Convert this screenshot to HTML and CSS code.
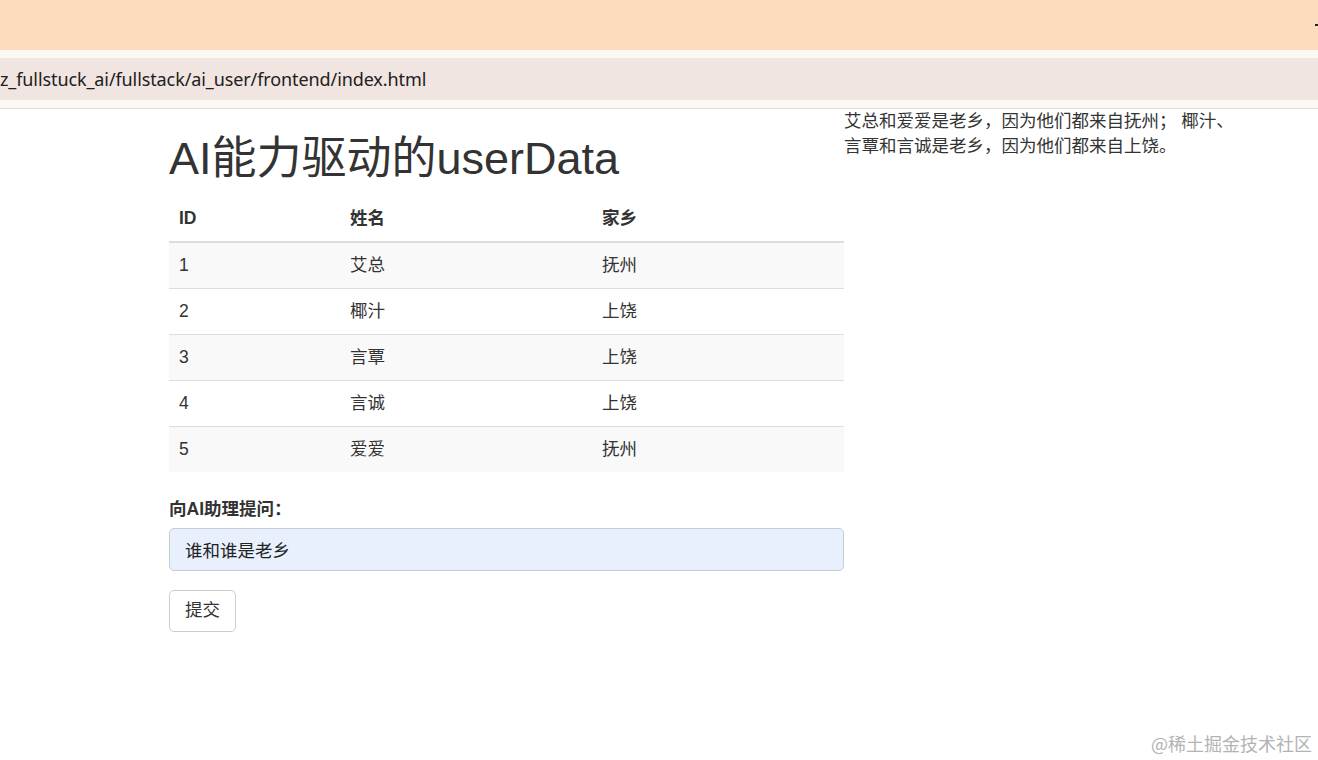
FILE: index.html
```html
<!DOCTYPE html>
<html lang="zh-CN">
<head>
<meta charset="utf-8">
<title>AI能力驱动的userData</title>
<link rel="stylesheet" href="styles.css">
</head>
<body>
<div class="chrome">
  <div class="tabbar"><span class="tab-mark"></span></div>
  <div class="gap"></div>
  <div class="addressbar"><span class="url">z_fullstuck_ai/fullstack/ai_user/frontend/index.html</span></div>
  <div class="gap gap-bottom"></div>
</div>
<div class="page">
  <div class="main-col">
    <h1 class="title">AI能力驱动的userData</h1>
    <table class="table">
      <thead>
        <tr><th class="c-id">ID</th><th class="c-name">姓名</th><th class="c-home">家乡</th></tr>
      </thead>
      <tbody>
        <tr><td>1</td><td>艾总</td><td>抚州</td></tr>
        <tr><td>2</td><td>椰汁</td><td>上饶</td></tr>
        <tr><td>3</td><td>言覃</td><td>上饶</td></tr>
        <tr><td>4</td><td>言诚</td><td>上饶</td></tr>
        <tr><td>5</td><td>爱爱</td><td>抚州</td></tr>
      </tbody>
    </table>
    <form class="ask-form">
      <div class="form-group">
        <label class="label" for="q">向AI助理提问：</label>
        <input class="input" id="q" type="text" value="谁和谁是老乡">
      </div>
      <button class="btn" type="button">提交</button>
    </form>
  </div>
  <div class="answer-col">艾总和爱爱是老乡，因为他们都来自抚州； 椰汁、言覃和言诚是老乡，因为他们都来自上饶。</div>
</div>
<div class="watermark">@稀土掘金技术社区</div>
</body>
</html>
```

FILE: styles.css
```css
* { box-sizing: border-box; }
html, body { margin: 0; padding: 0; }
body {
  width: 1318px;
  height: 760px;
  overflow: hidden;
  background: #fff;
  color: #333;
  font-family: "Liberation Sans", Arial, "Noto Sans CJK SC", sans-serif;
  font-size: 17.5px;
  line-height: 25px;
  position: relative;
}
.chrome { display: flex; flex-direction: column; }
.tabbar {
  height: 50px;
  background: #fddcbe;
  position: relative;
}
.tab-mark {
  position: absolute;
  right: 0;
  top: 24px;
  width: 3px;
  height: 1.5px;
  background: #222;
}
.gap { height: 8px; background: #fef8f3; }
.gap-bottom { border-bottom: 1px solid #e6dedb; height: 9px; }
.addressbar {
  height: 42px;
  background: #f1e5e2;
  display: flex;
  align-items: center;
}
.url {
  font-family: "Noto Sans", "Open Sans", sans-serif;
  font-size: 18px;
  color: #202020;
  letter-spacing: -0.1px;
}
.page {
  display: flex;
  align-items: flex-start;
  padding-left: 169px;
}
.main-col { width: 675px; }
.title {
  margin: 24.5px 0 12.5px;
  font-size: 45px;
  font-weight: 400;
  line-height: 50px;
  color: #333;
  font-family: "Liberation Sans", Arial, "Noto Sans CJK SC", sans-serif;
}
.table {
  width: 675px;
  border-collapse: collapse;
  border-spacing: 0;
  margin-bottom: 25px;
}
.table th, .table td {
  text-align: left;
  padding: 10px;
  line-height: 25px;
  vertical-align: top;
}
.table th {
  font-weight: bold;
  border-bottom: 2.5px solid #ddd;
}
.table td { border-top: 1.25px solid #ddd; }
.table tbody tr:first-child td { border-top: 0; }
.table tbody tr:nth-child(odd) td { background: #f9f9f9; }
.c-id { width: 171px; }
.c-name { width: 252px; }
.c-home { width: 252px; }
.form-group { margin-bottom: 18.75px; }
.label {
  display: inline-block;
  font-weight: bold;
  margin-bottom: 6.25px;
}
.input {
  display: block;
  width: 100%;
  height: 42.5px;
  padding: 7.5px 15px;
  font: inherit;
  color: #222;
  background: #e8f0fe;
  border: 1.25px solid #c6cbd4;
  border-radius: 5px;
  outline: none;
}
.btn {
  display: inline-block;
  height: 42.5px;
  padding: 7.5px 15px;
  font: inherit;
  color: #333;
  background: #fff;
  border: 1.25px solid #ccc;
  border-radius: 5px;
}
.answer-col {
  width: 400px;
  font-family: "Liberation Sans", Arial, "Noto Sans CJK SC", sans-serif;
}
.watermark {
  position: absolute;
  right: 6px;
  bottom: 5px;
  font-family: "Noto Sans CJK SC", sans-serif;
  font-size: 18px;
  line-height: 24px;
  color: #b3b3b3;
}
```
